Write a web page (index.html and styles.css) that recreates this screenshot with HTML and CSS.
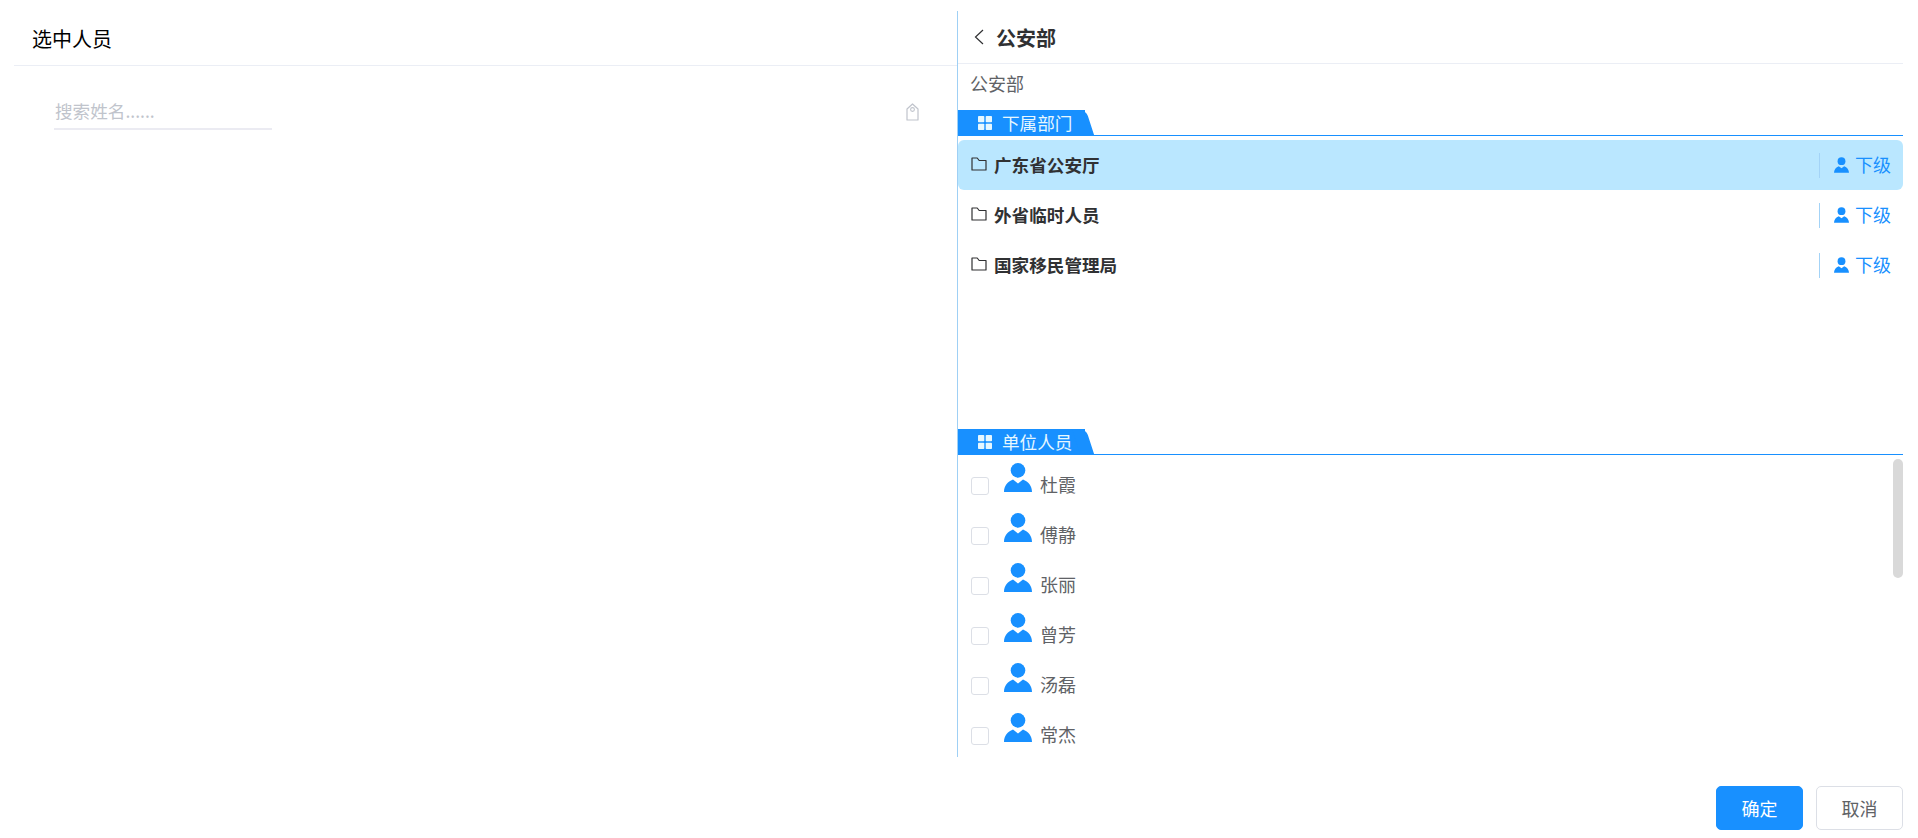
FILE: index.html
```html
<!DOCTYPE html>
<html lang="zh-CN">
<head>
<meta charset="utf-8">
<title>选中人员</title>
<link rel="stylesheet" href="styles.css">
</head>
<body>
<svg class="defs" width="0" height="0" aria-hidden="true">
  <symbol id="person" viewBox="0 0 28 29">
    <circle cx="14" cy="7.400" r="7.300"/>
    <path d="M0 29C0 23 3.500 18.800 9 16.600L14 20.600L19 16.600C24.500 18.800 28 23 28 29Z"/>
  </symbol>
  <symbol id="grid" viewBox="0 0 14 14">
    <rect x="0" y="0" width="6.300" height="6.300" rx="0.800"/>
    <rect x="7.700" y="0" width="6.300" height="6.300" rx="0.800"/>
    <rect x="0" y="7.700" width="6.300" height="6.300" rx="0.800"/>
    <rect x="7.700" y="7.700" width="6.300" height="6.300" rx="0.800"/>
  </symbol>
  <symbol id="folder" viewBox="0 0 16 14">
    <path d="M1 1H6.200L8.200 3.500H15V13H1Z" fill="none" stroke="#303133" stroke-width="1.200" stroke-linejoin="round"/>
  </symbol>
</svg>

<main class="dialog">
  <div class="panels">
    <section class="left">
      <h2 class="left-title">选中人员</h2>
      <div class="search">
        <input class="search-input" type="text" placeholder="搜索姓名......">
        <svg class="tag" viewBox="0 0 13 18" width="13" height="18"><path d="M1 6L6.500 1L12 6V17H1Z" fill="none" stroke="#c0c4cc" stroke-width="1.200" stroke-linejoin="round"/><circle cx="6.500" cy="6.500" r="1.900" fill="none" stroke="#c0c4cc" stroke-width="1.100"/></svg>
      </div>
    </section>

    <section class="right">
      <header class="right-head">
        <svg class="back" viewBox="0 0 10 16" width="10" height="16"><path d="M9 1L1.500 8L9 15" fill="none" stroke="#303133" stroke-width="1.200"/></svg>
        <h2 class="right-title">公安部</h2>
      </header>
      <div class="crumb">公安部</div>

      <div class="tabbar">
        <div class="tab"><svg class="tab-icon"><use href="#grid"/></svg><span>下属部门</span></div>
      </div>
      <ul class="depts">
        <li class="dept dept-active"><svg class="folder"><use href="#folder"/></svg><span class="dept-name">广东省公安厅</span><a class="sub"><svg class="sub-icon"><use href="#person"/></svg><span class="sub-label">下级</span></a></li>
        <li class="dept"><svg class="folder"><use href="#folder"/></svg><span class="dept-name">外省临时人员</span><a class="sub"><svg class="sub-icon"><use href="#person"/></svg><span class="sub-label">下级</span></a></li>
        <li class="dept"><svg class="folder"><use href="#folder"/></svg><span class="dept-name">国家移民管理局</span><a class="sub"><svg class="sub-icon"><use href="#person"/></svg><span class="sub-label">下级</span></a></li>
      </ul>

      <div class="tabbar">
        <div class="tab"><svg class="tab-icon"><use href="#grid"/></svg><span>单位人员</span></div>
      </div>
      <div class="people-wrap">
        <ul class="people">
          <li class="person"><span class="check"></span><svg class="avatar"><use href="#person"/></svg><span class="name">杜霞</span></li>
          <li class="person"><span class="check"></span><svg class="avatar"><use href="#person"/></svg><span class="name">傅静</span></li>
          <li class="person"><span class="check"></span><svg class="avatar"><use href="#person"/></svg><span class="name">张丽</span></li>
          <li class="person"><span class="check"></span><svg class="avatar"><use href="#person"/></svg><span class="name">曾芳</span></li>
          <li class="person"><span class="check"></span><svg class="avatar"><use href="#person"/></svg><span class="name">汤磊</span></li>
          <li class="person"><span class="check"></span><svg class="avatar"><use href="#person"/></svg><span class="name">常杰</span></li>
        </ul>
        <div class="thumb"></div>
      </div>
    </section>
  </div>

  <footer class="footer">
    <button class="btn btn-primary" type="button">确定</button>
    <button class="btn" type="button">取消</button>
  </footer>
</main>
</body>
</html>
```

FILE: styles.css
```css
* { box-sizing: border-box; }

html, body {
  margin: 0;
  padding: 0;
  height: 100%;
  background: #fff;
  overflow: hidden;
}

body {
  font-family: "Noto Sans CJK SC", "Liberation Sans", sans-serif;
  font-size: 18px;
  color: #606266;
}

.defs { position: absolute; }

.dialog {
  display: flex;
  flex-direction: column;
  height: 838px;
  padding: 11px 15px 0 14px;
}

.panels {
  flex: none;
  display: flex;
  height: 746px;
}

/* left */
.left {
  width: 943px;
  flex: none;
}

.left-title {
  margin: 0;
  height: 55px;
  padding-left: 18px;
  border-bottom: 1px solid #ebeef5;
  font-size: 20px;
  font-weight: 400;
  line-height: 55px;
  color: #000;
}

.search {
  display: flex;
  align-items: flex-start;
  justify-content: space-between;
  padding: 30px 38px 0 40px;
}

.search-input {
  width: 218px;
  height: 34px;
  padding: 0 0 3px 1px;
  border: 0;
  border-bottom: 2px solid #ebebf2;
  outline: 0;
  background: transparent;
  font: inherit;
  font-size: 17.600px;
  color: #606266;
}

.search-input::placeholder { color: #c0c4cc; opacity: 1; }

.tag { margin-top: 7px; }

/* right */
.right {
  flex: 1;
  min-width: 0;
  display: flex;
  flex-direction: column;
  border-left: 1px solid #9fd0f5;
}

.right-head {
  flex: none;
  display: flex;
  align-items: center;
  height: 53px;
  padding-left: 16px;
  border-bottom: 1px solid #ebeef5;
}

.back { margin-right: 12px; }

.right-title {
  margin: 0;
  font-size: 20px;
  font-weight: 700;
  color: #303133;
}

.crumb {
  flex: none;
  height: 46px;
  padding-left: 12px;
  line-height: 38px;
  color: #606266;
}

.tabbar {
  flex: none;
  height: 26px;
  border-bottom: 1px solid #1890ff;
}

.tab {
  position: relative;
  display: flex;
  align-items: center;
  width: 127px;
  height: 25px;
  padding-left: 20px;
  background: #1890ff;
  color: #e6f7ff;
  font-size: 17.600px;
  line-height: 25px;
}

.tab::after {
  content: "";
  position: absolute;
  top: 0;
  right: -5px;
  width: 14px;
  height: 25px;
  background: #1890ff;
  border-top-right-radius: 6px;
  transform: skewX(18deg);
}

.tab-icon {
  flex: none;
  width: 14px;
  height: 14px;
  margin-right: 10px;
  fill: #e6f7ff;
}

.tab span {
  position: relative;
  z-index: 1;
}

/* departments */
.depts {
  flex: none;
  height: 293px;
  margin: 0;
  padding: 4px 0 0;
  list-style: none;
}

.dept {
  display: flex;
  align-items: center;
  height: 50px;
  padding: 0 12px 0 13px;
  border-radius: 6px;
}

.dept-active { background: #bae7ff; }

.folder {
  flex: none;
  width: 16px;
  height: 14px;
  margin: -3px 7px 0 0;
}

.dept-name {
  flex: 1;
  padding-bottom: 2px;
  font-size: 17.600px;
  font-weight: 700;
  color: #303133;
}

.sub {
  display: flex;
  align-items: center;
  height: 25px;
  padding-left: 14px;
  border-left: 1px solid #a3d3f7;
  color: #1890ff;
}

.sub-label { padding-bottom: 2px; }

.sub-icon {
  flex: none;
  width: 15px;
  height: 16px;
  margin-right: 6px;
  fill: #1890ff;
}

/* people */
.people-wrap {
  position: relative;
  flex: none;
  height: 302px;
}

.people {
  height: 100%;
  margin: 0;
  padding: 5px 0 0;
  list-style: none;
  overflow: hidden;
}

.thumb {
  position: absolute;
  top: 4px;
  right: 0;
  width: 10px;
  height: 119px;
  border-radius: 5px;
  background: #d9d9d9;
}

.person {
  display: flex;
  align-items: center;
  height: 50px;
  padding-left: 13px;
}

.check {
  flex: none;
  width: 18px;
  height: 18px;
  margin-top: 2px;
  border: 1px solid #dcdfe6;
  border-radius: 3px;
  background: #fff;
}

.avatar {
  flex: none;
  align-self: flex-start;
  width: 28px;
  height: 29px;
  margin: 3px 8px 0 15px;
  fill: #1890ff;
}

.name {
  padding-bottom: 2px;
  color: #606266;
}

/* footer */
.footer {
  flex: none;
  display: flex;
  justify-content: flex-end;
  gap: 13px;
  margin-top: 29px;
}

.btn {
  width: 87px;
  height: 44px;
  padding: 0;
  border: 1px solid #dcdfe6;
  border-radius: 5px;
  background: #fff;
  font: inherit;
  color: #606266;
}

.btn-primary {
  border-color: #1890ff;
  background: #1890ff;
  color: #fff;
}
```
